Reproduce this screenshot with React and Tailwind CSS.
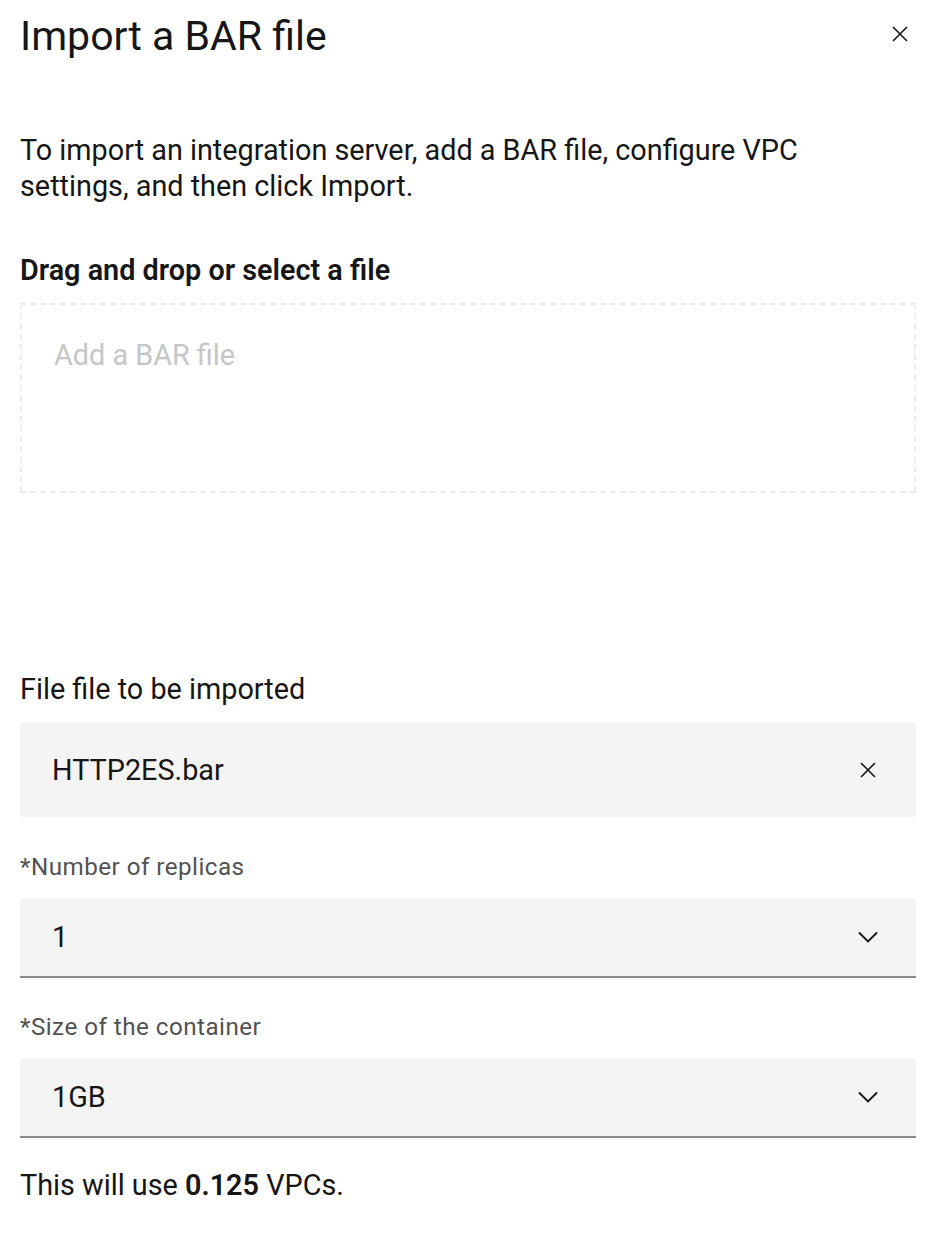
import React from 'react';

const font = { fontFamily: 'Roboto, "Liberation Sans", sans-serif' };

const CloseIcon = ({ className }) => (
  <svg viewBox="0 0 16 16" className={className} fill="none" stroke="currentColor" strokeWidth="1.6">
    <path d="M1 1 L15 15 M15 1 L1 15" />
  </svg>
);

const ChevronIcon = ({ className }) => (
  <svg viewBox="0 0 20 12" className={className} fill="none" stroke="currentColor" strokeWidth="1.9">
    <path d="M1 1.5 L10 10.5 L19 1.5" />
  </svg>
);

const Select = ({ value }) => (
  <div className="flex h-[80px] items-center justify-between border-b-2 border-[#8d8d8d] bg-[#f4f4f4] pl-8 pr-[38px]">
    <span className="text-[28.8px] leading-[36px] text-[#161616]">{value}</span>
    <ChevronIcon className="h-[12px] w-[20px] text-[#161616]" />
  </div>
);

export default function App() {
  return (
    <div className="min-h-[1238px] w-[938px] bg-white pl-5 pr-[22px] text-[#161616]" style={font}>
      <div className="flex items-start justify-between pt-[11px]">
        <h1 className="text-[41px] font-normal leading-[50px]">Import a BAR file</h1>
        <button type="button" className="mr-[8px] mt-[15px] p-0">
          <CloseIcon className="h-[16px] w-[16px] text-[#161616]" />
        </button>
      </div>

      <p className="mt-[71px] text-[28.8px] leading-[36px]">
        To import an integration server, add a BAR file, configure VPC
        <br />
        settings, and then click Import.
      </p>

      <div className="mt-[48px] text-[28.8px] font-semibold leading-[36px]">Drag and drop or select a file</div>

      <div className="mt-[15px] h-[190px] border-2 border-dashed border-[#ececec] pl-[32px] pt-[32px]">
        <span className="text-[28.8px] leading-[36px] text-[#c6c6c6]">Add a BAR file</span>
      </div>

      <div className="mt-[178px] text-[28.8px] leading-[36px]">File file to be imported</div>

      <div className="mt-[15px] flex h-[95px] items-center justify-between bg-[#f4f4f4] pl-8 pr-[40px]">
        <span className="text-[28.8px] leading-[36px]">HTTP2ES.bar</span>
        <CloseIcon className="h-[16px] w-[16px] text-[#161616]" />
      </div>

      <div className="mt-[36px] text-[24.2px] leading-[28px] tracking-[0.48px] text-[#525252]">*Number of replicas</div>
      <div className="mt-[17px]">
        <Select value="1" />
      </div>

      <div className="mt-[35px] text-[24.2px] leading-[28px] tracking-[0.48px] text-[#525252]">*Size of the container</div>
      <div className="mt-[17px]">
        <Select value="1GB" />
      </div>

      <p className="mt-[29px] text-[28.8px] leading-[36px]">
        This will use <span className="font-semibold">0.125</span> VPCs.
      </p>
    </div>
  );
}
